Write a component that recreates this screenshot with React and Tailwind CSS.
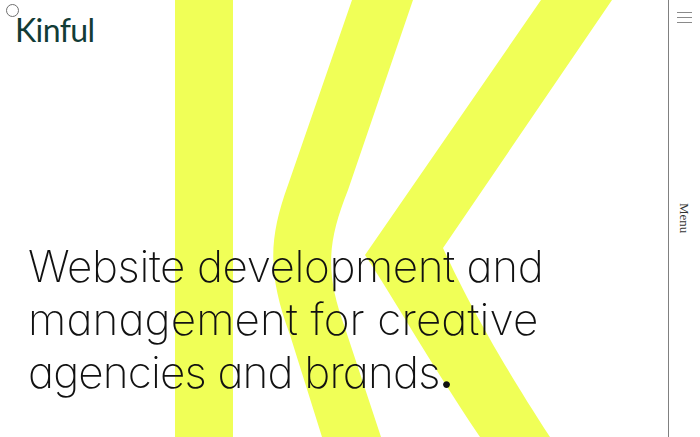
import { useState } from 'react';

const lines = [
  { text: 'Website development and', className: 'tracking-[-0.4px]' },
  { text: 'management for creative', className: 'tracking-[0.12px]' },
  { text: 'agencies and brands', className: 'tracking-[-0.85px]' },
];

function BigK() {
  return (
    <svg className="absolute inset-0 w-full h-full" viewBox="0 0 668 437" preserveAspectRatio="none" aria-hidden="true">
      <rect x="175" y="0" width="58" height="437" fill="#f0ff57" />
      <path
        d="M352 0 L413 0 L348 190 C326 245 326 275 345 328 L381 437 L322 437 L290 335 C268 275 268 240 288 185 Z"
        fill="#f0ff57"
      />
      <path d="M541 0 L612 0 L443 248 C460 285 490 345 550 437 L480 437 C425 355 395 300 365 255 Z" fill="#f0ff57" />
    </svg>
  );
}

export default function App() {
  const [menuOpen, setMenuOpen] = useState(false);

  return (
    <div className="flex h-[437px] w-[700px] overflow-hidden bg-white font-['Inter',sans-serif]">
      <main className="relative flex flex-1 flex-col justify-between">
        <BigK />

        <header className="relative pl-[15px] pt-[12px]">
          <span className="absolute left-[6px] top-[4px] h-[13px] w-[13px] rounded-full border border-[#6f6f6f]" />
          <a href="#" className="block font-['Lato',sans-serif] text-[32px] font-normal leading-[36px] tracking-[-0.6px] text-[#123c36]">
            Kinful
          </a>
        </header>

        <h1 className="relative pb-[38px] pl-[28px] text-[44px] font-[150] leading-[53px] text-[#111] will-change-transform [font-feature-settings:'cv11']">
          {lines.map((line, i) => (
            <div key={line.text} className={`whitespace-nowrap ${line.className}`}>
              {line.text}
              {i === lines.length - 1 && <span className="font-semibold">.</span>}
            </div>
          ))}
        </h1>
      </main>

      <aside className="relative flex w-[32px] flex-col items-center border-l border-[#808080] bg-white">
        <button onClick={() => setMenuOpen(!menuOpen)} className="mt-[12px] flex flex-col gap-[4px]" aria-label="Menu">
          <span className="block h-px w-[15px] bg-[#8a8a8a]" />
          <span className="block h-px w-[15px] bg-[#8a8a8a]" />
          <span className="block h-px w-[15px] bg-[#8a8a8a]" />
        </button>
        <span className="mt-[180px] font-['Liberation_Serif',serif] text-[13px] leading-none text-[#333] [writing-mode:vertical-rl]">
          Menu
        </span>
      </aside>
    </div>
  );
}
